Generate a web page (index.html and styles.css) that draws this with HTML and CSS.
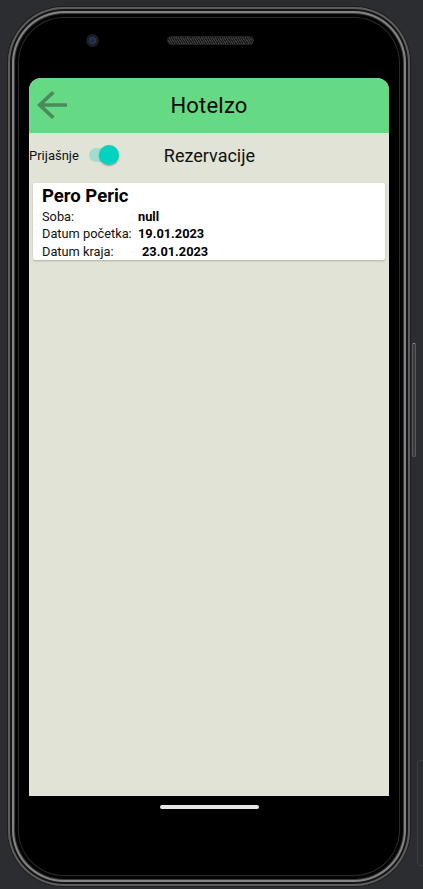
FILE: index.html
```html
<!DOCTYPE html>
<html lang="hr">
<head>
<meta charset="utf-8">
<title>Hotelzo</title>
<link rel="stylesheet" href="styles.css">
</head>
<body>
<div class="device">
  <div class="btn btn-power"></div>
  <div class="btn btn-volume"></div>
  <div class="phone">
    <div class="bezel-top">
      <div class="camera"><div class="lens"></div></div>
      <div class="speaker"></div>
    </div>
    <div class="screen">
      <div class="appbar">
        <svg class="back" viewBox="4 4 16 16" preserveAspectRatio="none" width="30" height="28"><path d="M20 11H7.83l5.59-5.59L12 4l-8 8 8 8 1.41-1.41L7.83 13H20v-2z"/></svg>
        <div class="title">Hotelzo</div>
        <div></div>
      </div>
      <div class="toolbar">
        <span class="toggle-label">Prijašnje</span>
        <div class="switch"><div class="track"></div><div class="thumb"></div></div>
        <span class="section">Rezervacije</span>
      </div>
      <div class="card">
        <div class="name">Pero Peric</div>
        <div class="details">
          <span class="label">Soba:</span><span class="value">null</span>
          <span class="label">Datum početka:</span><span class="value">19.01.2023</span>
          <span class="label">Datum kraja:</span><span class="value shifted">23.01.2023</span>
        </div>
      </div>
    </div>
    <div class="bezel-bottom">
      <div class="homebar"></div>
    </div>
  </div>
</div>
</body>
</html>
```
FILE: styles.css
```css
* { box-sizing: border-box; }
html, body { margin: 0; padding: 0; }
body {
  background: #2c2d30;
  width: 423px;
  height: 889px;
  overflow: hidden;
  font-family: Roboto, "Noto Sans", sans-serif;
}
.device {
  position: relative;
  padding: 7px 0 0 8px;
}
.phone {
  width: 402px;
  height: 879px;
  border-radius: 56px;
  background: #000;
  box-shadow:
    0 0 0 1px #1d1d1f,
    inset 0 0 0 2px #5e5e60,
    inset 0 0 0 4px #161616,
    inset 0 0 0 6px #838385,
    inset 0 0 0 7px #3a3a3c,
    inset 0 0 0 10px #050505,
    inset 0 0 0 11px #2a2a2c;
  padding: 0 21px;
  display: flex;
  flex-direction: column;
}
.bezel-top {
  height: 71px;
  padding: 0 0 5px 57px;
  display: flex;
  align-items: center;
  gap: 68px;
}
.camera {
  width: 13px;
  height: 13px;
  border-radius: 50%;
  background: #1c1d22;
  display: flex;
  align-items: center;
  justify-content: center;
}
.lens {
  width: 7px;
  height: 7px;
  border-radius: 50%;
  background: #1e2a4a;
  box-shadow: inset 0 0 0 1px #2d3a60;
}
.speaker {
  width: 87px;
  height: 9px;
  border-radius: 5px;
  background:
    repeating-linear-gradient(60deg, #1a1a1a 0 1px, #3a3a3a 1px 2px),
    #2a2a2a;
  box-shadow: inset 0 0 0 1px #222;
}
.screen {
  width: 360px;
  height: 718px;
  border-radius: 12px 12px 0 0;
  background: #e1e3d6;
  overflow: hidden;
  display: flex;
  flex-direction: column;
}
.appbar {
  height: 55px;
  flex: none;
  background: #66d985;
  display: grid;
  grid-template-columns: 1fr auto 1fr;
  align-items: center;
}
.back {
  fill: #4b8b5b;
  display: block;
  margin: -1px 0 0 8px;
}
.title {
  font-size: 22px;
  color: #0a0a0a;
  letter-spacing: 0.2px;
}
.toolbar {
  height: 44px;
  flex: none;
  display: flex;
  align-items: center;
}
.toggle-label {
  font-size: 13px;
  color: #111;
}
.switch {
  width: 30px;
  height: 20px;
  margin-left: 10px;
  display: flex;
  align-items: center;
  position: relative;
}
.track {
  width: 28px;
  height: 14px;
  border-radius: 7px;
  background: #a2ddd0;
}
.thumb {
  position: absolute;
  right: 0;
  top: 0;
  width: 20px;
  height: 20px;
  border-radius: 50%;
  background: #00d3c0;
  box-shadow: 0 1px 2px rgba(0,0,0,0.3);
}
.section {
  font-size: 18px;
  color: #111;
  margin-left: 45px;
}
.card {
  margin: 6px 4px 0;
  height: 77px;
  background: #fff;
  border-radius: 2px;
  box-shadow: 0 1px 2px rgba(0,0,0,0.22);
  padding: 3px 9px 0;
}
.name {
  font-size: 18.5px;
  font-weight: 700;
  line-height: 21px;
  color: #000;
}
.details {
  margin-top: 1px;
  display: grid;
  grid-template-columns: 96px 1fr;
  font-size: 12.8px;
  line-height: 17.3px;
  color: #111;
}
.value {
  font-weight: 700;
  color: #000;
}
.shifted { margin-left: 4px; }
.bezel-bottom {
  flex: 1;
  display: flex;
  justify-content: center;
  padding-top: 9px;
}
.homebar {
  width: 99px;
  height: 4px;
  border-radius: 2px;
  background: #e6e6e6;
}
.btn {
  position: absolute;
  border-radius: 3px;
}
.btn-power {
  left: 412px;
  top: 343px;
  width: 4px;
  height: 114px;
  background: #3a3a3c;
  border: 1px solid #5a5a5c;
  border-top-color: #9a9a9c;
}
.btn-volume {
  left: 417px;
  top: 760px;
  width: 8px;
  height: 106px;
  border: 1px solid #3b3c3f;
}
```
